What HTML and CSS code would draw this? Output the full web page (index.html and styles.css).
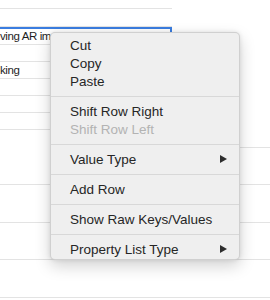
FILE: index.html
```html
<!DOCTYPE html>
<html lang="en">
<head>
    <meta charset="UTF-8">
    <meta name="viewport" content="width=device-width, initial-scale=1">
    <title>Property List Menu</title>
    <link rel="stylesheet" href="styles.css">
</head>
<body>
    <div class="page">
        <!-- Property list rows behind the menu -->
        <div class="plist">
            <div class="row row-top"></div>
            <div class="row row-tall"></div>
            <div class="row selected"><span class="cell-text">ving AR im</span></div>
            <div class="row"></div>
            <div class="row"><span class="cell-text">king</span></div>
            <div class="row"></div>
            <div class="row"></div>
            <div class="row"></div>
        </div>
        <div class="side-row"></div>
        <div class="band"></div>
        <div class="band tall"></div>
        <div class="band"></div>
        <div class="band tall"></div>

        <!-- Context menu -->
        <div class="menu">
            <div class="item">Cut</div>
            <div class="item">Copy</div>
            <div class="item">Paste</div>
            <div class="separator"></div>
            <div class="item">Shift Row Right</div>
            <div class="item disabled">Shift Row Left</div>
            <div class="separator"></div>
            <div class="item submenu">Value Type</div>
            <div class="separator"></div>
            <div class="item">Add Row</div>
            <div class="separator"></div>
            <div class="item">Show Raw Keys/Values</div>
            <div class="separator"></div>
            <div class="item submenu">Property List Type</div>
        </div>
    </div>
</body>
</html>
```

FILE: styles.css
```css
:root {
    --line-color: #e3e3e3;
    --menu-bg: #efefef;
    --menu-text: #262626;
    --focus-blue: #3a7de0;
}

* {
    margin: 0;
    padding: 0;
    box-sizing: border-box;
}

body {
    background: white;
    font-family: 'Liberation Sans', Arial, sans-serif;
    overflow: hidden;
}

.page {
    position: relative;
    width: 270px;
    height: 300px;
    overflow: hidden;
}

.plist {
    width: 172px;
}

.row {
    height: 17px;
    border-bottom: 1px solid var(--line-color);
    font-size: 11.5px;
    letter-spacing: -0.4px;
    line-height: 16px;
    color: #1e1e1e;
    white-space: nowrap;
    overflow: hidden;
}

.row-top {
    height: 9px;
}

.row-tall {
    height: 18px;
}

.selected {
    height: 18px;
    border: 2px solid var(--focus-blue);
    border-left: none;
    border-bottom-color: var(--line-color);
    border-bottom-width: 1px;
    line-height: 15px;
}

.side-row {
    height: 18px;
    margin-left: 172px;
    border-bottom: 1px solid var(--line-color);
}

.band {
    height: 37px;
    border-bottom: 1px solid var(--line-color);
}

.band.tall {
    height: 38px;
}

.menu {
    position: absolute;
    left: 50px;
    top: 32px;
    width: 190px;
    height: 228px;
    padding: 3px 0;
    background: var(--menu-bg);
    border: 1px solid rgba(0, 0, 0, 0.13);
    border-radius: 5px;
    box-shadow: 0 6px 16px rgba(0, 0, 0, 0.18), 0 0 4px rgba(0, 0, 0, 0.1);
}

.item {
    display: flex;
    align-items: center;
    justify-content: space-between;
    height: 18px;
    padding: 0 12px 0 19px;
    font-size: 13.5px;
    color: var(--menu-text);
    white-space: nowrap;
}

.item.disabled {
    color: #b3b3b3;
}

.submenu::after {
    content: "";
    width: 0;
    height: 0;
    border-top: 4.5px solid transparent;
    border-bottom: 4.5px solid transparent;
    border-left: 7px solid #2e2e2e;
}

.separator {
    height: 12px;
    display: flex;
    align-items: center;
}

.separator::before {
    content: "";
    flex: 1;
    height: 1px;
    background: #d8d8d8;
}
```
